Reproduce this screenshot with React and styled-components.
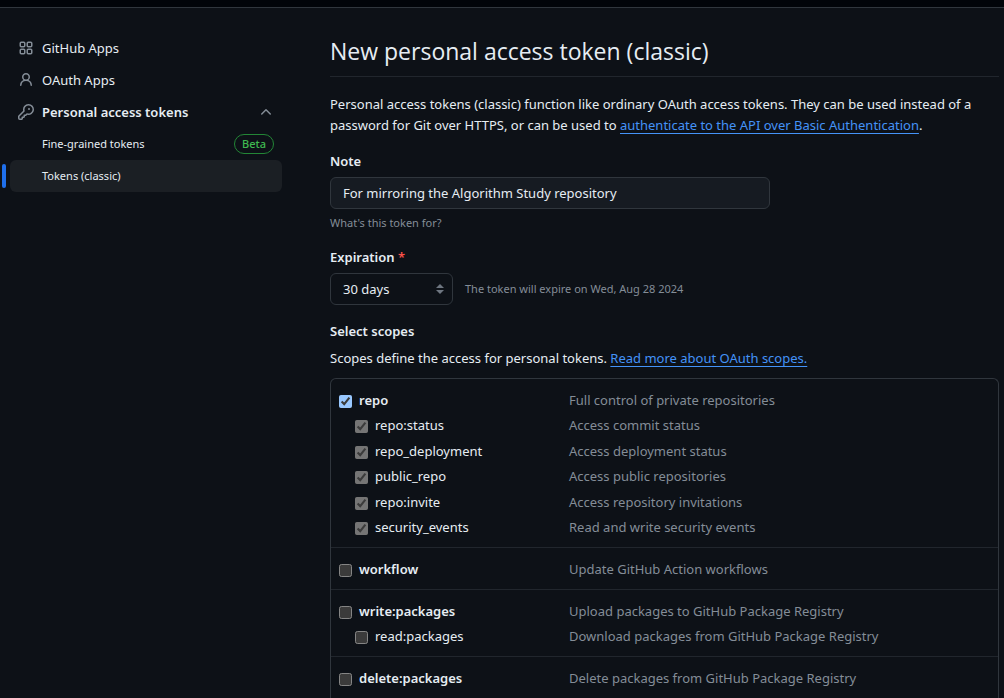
import { useState } from "react";
import styled, { createGlobalStyle } from "styled-components";

const scopeGroups = [
  {
    name: "repo",
    description: "Full control of private repositories",
    children: [
      { name: "repo:status", description: "Access commit status" },
      { name: "repo_deployment", description: "Access deployment status" },
      { name: "public_repo", description: "Access public repositories" },
      { name: "repo:invite", description: "Access repository invitations" },
      { name: "security_events", description: "Read and write security events" },
    ],
  },
  {
    name: "workflow",
    description: "Update GitHub Action workflows",
    children: [],
  },
  {
    name: "write:packages",
    description: "Upload packages to GitHub Package Registry",
    children: [
      {
        name: "read:packages",
        description: "Download packages from GitHub Package Registry",
      },
    ],
  },
  {
    name: "delete:packages",
    description: "Delete packages from GitHub Package Registry",
    children: [],
  },
];

function AppsIcon() {
  return (
    <Icon viewBox="0 0 16 16" aria-hidden="true">
      <g fill="none" stroke="currentColor" strokeWidth="1.5">
        <rect x="2.25" y="2.25" width="4.5" height="4.5" rx="1" />
        <rect x="9.25" y="2.25" width="4.5" height="4.5" rx="1" />
        <rect x="2.25" y="9.25" width="4.5" height="4.5" rx="1" />
        <rect x="9.25" y="9.25" width="4.5" height="4.5" rx="1" />
      </g>
    </Icon>
  );
}

function PersonIcon() {
  return (
    <Icon viewBox="0 0 16 16" aria-hidden="true">
      <path d="M10.561 8.073a6.005 6.005 0 0 1 3.432 5.142.75.75 0 1 1-1.498.07 4.5 4.5 0 0 0-8.99 0 .75.75 0 0 1-1.498-.07 6.004 6.004 0 0 1 3.431-5.142 3.999 3.999 0 1 1 5.123 0ZM10.5 5a2.5 2.5 0 1 0-5 0 2.5 2.5 0 0 0 5 0Z" />
    </Icon>
  );
}

function KeyIcon() {
  return (
    <Icon viewBox="0 0 16 16" aria-hidden="true">
      <path d="M10.5 0a5.499 5.499 0 1 1-1.288 10.848l-.932.932a.749.749 0 0 1-.53.22H7v.75a.749.749 0 0 1-.22.53l-.5.5a.749.749 0 0 1-.53.22H5v.75a.749.749 0 0 1-.22.53l-.5.5a.749.749 0 0 1-.53.22h-2A1.75 1.75 0 0 1 0 14.25v-2c0-.199.079-.389.22-.53l4.932-4.932A5.5 5.5 0 0 1 10.5 0Zm-4 5.5c-.001.431.069.86.205 1.269a.75.75 0 0 1-.181.768L1.5 12.56v1.69c0 .138.112.25.25.25h1.69l.06-.06v-1.19a.75.75 0 0 1 .75-.75h1.19l.06-.06v-1.19a.75.75 0 0 1 .75-.75h1.19l1.023-1.025a.75.75 0 0 1 .768-.18A4 4 0 1 0 6.5 5.5ZM11 6a1 1 0 1 1 0-2 1 1 0 0 1 0 2Z" />
    </Icon>
  );
}

function ChevronUpIcon() {
  return (
    <Icon viewBox="0 0 16 16" aria-hidden="true" $end>
      <path d="M3.22 10.53a.749.749 0 0 1 0-1.06l4.25-4.25a.749.749 0 0 1 1.06 0l4.25 4.25a.749.749 0 1 1-1.06 1.06L8 6.811 4.28 10.53a.749.749 0 0 1-1.06 0Z" />
    </Icon>
  );
}

function Sidebar() {
  return (
    <Nav aria-label="Developer settings">
      <NavLink href="#apps">
        <AppsIcon />
        GitHub Apps
      </NavLink>
      <NavLink href="#oauth">
        <PersonIcon />
        OAuth Apps
      </NavLink>
      <NavToggle type="button" aria-expanded="true">
        <KeyIcon />
        Personal access tokens
        <ChevronUpIcon />
      </NavToggle>
      <SubLink href="#fine-grained">
        Fine-grained tokens
        <Badge>Beta</Badge>
      </SubLink>
      <SubLink href="#classic" aria-current="page" $active>
        Tokens (classic)
      </SubLink>
    </Nav>
  );
}

function ScopeGroup({ group, selected, onToggle }) {
  const isParentSelected = selected.includes(group.name);

  return (
    <Group>
      <ScopeRow>
        <ScopeLabel $bold>
          <input
            type="checkbox"
            checked={isParentSelected}
            onChange={() => onToggle(group.name)}
          />
          {group.name}
        </ScopeLabel>
        <span>{group.description}</span>
      </ScopeRow>
      {group.children.map((scope) => (
        <ScopeRow key={scope.name}>
          <ScopeLabel $nested>
            <input
              type="checkbox"
              checked={isParentSelected || selected.includes(scope.name)}
              disabled={isParentSelected}
              onChange={() => onToggle(scope.name)}
            />
            {scope.name}
          </ScopeLabel>
          <span>{scope.description}</span>
        </ScopeRow>
      ))}
    </Group>
  );
}

function App() {
  const [note, setNote] = useState("For mirroring the Algorithm Study repository");
  const [selected, setSelected] = useState(["repo"]);

  const onToggle = (name) => {
    setSelected((prev) =>
      prev.includes(name) ? prev.filter((s) => s !== name) : [...prev, name]
    );
  };

  return (
    <>
      <GlobalStyle />
      <TopBar />
      <Layout>
        <Sidebar />
        <Main>
          <Title>New personal access token (classic)</Title>
          <Text>
            Personal access tokens (classic) function like ordinary OAuth access
            tokens. They can be used instead of a password for Git over HTTPS, or
            can be used to{" "}
            <a href="#basic-auth">
              authenticate to the API over Basic Authentication
            </a>
            .
          </Text>

          <Field>
            <Label htmlFor="note">Note</Label>
            <NoteInput
              id="note"
              value={note}
              onChange={(e) => setNote(e.target.value)}
            />
            <Hint>What's this token for?</Hint>
          </Field>

          <Field>
            <Label htmlFor="expiration">
              Expiration <em>*</em>
            </Label>
            <Inline>
              <Select id="expiration" defaultValue="30">
                <option value="7">7 days</option>
                <option value="30">30 days</option>
                <option value="60">60 days</option>
                <option value="90">90 days</option>
              </Select>
              <Hint>The token will expire on Wed, Aug 28 2024</Hint>
            </Inline>
          </Field>

          <SectionTitle>Select scopes</SectionTitle>
          <ScopesText>
            Scopes define the access for personal tokens.{" "}
            <a href="#scopes">Read more about OAuth scopes.</a>
          </ScopesText>
          <Scopes>
            {scopeGroups.map((group) => (
              <ScopeGroup
                key={group.name}
                group={group}
                selected={selected}
                onToggle={onToggle}
              />
            ))}
          </Scopes>
        </Main>
      </Layout>
    </>
  );
}

export default App;

const GlobalStyle = createGlobalStyle`
  * {
    box-sizing: border-box;
  }

  html {
    color-scheme: dark;
    background: #0d1117;
  }

  body {
    margin: 0;
    color: #e6edf3;
    font-family: "Noto Sans", "Open Sans", sans-serif;
    font-size: 13px;
    line-height: 21px;
  }
`;

const TopBar = styled.header`
  height: 8px;
  background: #010409;
  border-bottom: 1px solid #30363d;
`;

const Layout = styled.div`
  display: flex;
  gap: 48px;
  padding: 24px 5px 0 10px;
`;

const Icon = styled.svg`
  flex: none;
  width: 16px;
  height: 16px;
  margin-left: ${({ $end }) => ($end ? "auto" : "0")};
  color: #848d97;
  fill: currentColor;
`;

const Nav = styled.nav`
  flex: 0 0 272px;
  display: flex;
  flex-direction: column;
`;

const NavLink = styled.a`
  display: flex;
  align-items: center;
  gap: 8px;
  height: 32px;
  padding: 0 8px;
  border-radius: 6px;
  color: inherit;
  text-decoration: none;
`;

const NavToggle = styled.button`
  display: flex;
  align-items: center;
  gap: 8px;
  height: 32px;
  padding: 0 8px;
  border: 0;
  background: none;
  color: inherit;
  font: inherit;
  font-weight: 600;
  cursor: pointer;
`;

const SubLink = styled(NavLink)`
  position: relative;
  justify-content: space-between;
  padding-left: 32px;
  font-size: 11px;
  line-height: 18px;
  background: ${({ $active }) => ($active ? "#1b1f24" : "none")};

  &::before {
    content: "";
    display: ${({ $active }) => ($active ? "block" : "none")};
    position: absolute;
    left: -8px;
    top: 4px;
    width: 4px;
    height: 24px;
    border-radius: 6px;
    background: #1f6feb;
  }
`;

const Badge = styled.span`
  padding: 0 7px;
  border: 1px solid #238636;
  border-radius: 10px;
  color: #3fb950;
  font-weight: 500;
`;

const Main = styled.main`
  flex: 1;
  min-width: 0;

  a {
    color: #4493f8;
    text-decoration: underline;
    text-underline-offset: 3px;
  }
`;

const Title = styled.h1`
  margin: 0 0 17px;
  padding: 1px 0 7px;
  border-bottom: 1px solid #21262d;
  font-family: "Open Sans", "Noto Sans", sans-serif;
  font-size: 23px;
  font-weight: 400;
  line-height: 36px;
`;

const Text = styled.p`
  margin: 0 0 15px;
`;

const Field = styled.div`
  margin-bottom: 15px;
`;

const Label = styled.label`
  display: block;
  margin-bottom: 5px;
  font-weight: 600;

  em {
    color: #f85149;
    font-style: normal;
  }
`;

const NoteInput = styled.input`
  display: block;
  width: 440px;
  max-width: 100%;
  height: 32px;
  margin-bottom: 5px;
  padding: 0 12px;
  border: 1px solid #30363d;
  border-radius: 6px;
  background: #161b22;
  color: inherit;
  font: inherit;
`;

const Hint = styled.div`
  color: #848d97;
  font-size: 11px;
  line-height: 18px;
`;

const Inline = styled.div`
  display: flex;
  align-items: center;
  gap: 12px;
`;

const Select = styled.select`
  appearance: none;
  width: 123px;
  height: 32px;
  padding: 0 24px 0 12px;
  border: 1px solid #30363d;
  border-radius: 6px;
  background: #0d1117
    url("data:image/svg+xml,%3Csvg xmlns='http://www.w3.org/2000/svg' width='16' height='16' fill='%236e7681'%3E%3Cpath d='M4 9h8l-4 4zM4 7l4-4 4 4z'/%3E%3C/svg%3E")
    no-repeat right 4px center;
  color: inherit;
  font: inherit;
`;

const SectionTitle = styled.h2`
  margin: 16px 0 6px;
  font-size: 13px;
  font-weight: 600;
`;

const ScopesText = styled.p`
  margin: 0 0 9px;
`;

const Scopes = styled.div`
  border: 1px solid #30363d;
  border-bottom: 0;
  border-radius: 6px 6px 0 0;
`;

const Group = styled.ul`
  margin: 0;
  padding: 8px 8px 7px;
  list-style: none;

  & + & {
    border-top: 1px solid #21262d;
  }
`;

const ScopeRow = styled.li`
  display: grid;
  grid-template-columns: 230px 1fr;
  align-items: center;
  min-height: 25px;
  color: #848d97;

  &:nth-child(odd) {
    min-height: 26px;
  }
`;

const ScopeLabel = styled.label`
  display: flex;
  align-items: center;
  gap: 7px;
  padding-left: ${({ $nested }) => ($nested ? "16px" : "0")};
  color: #e6edf3;
  font-weight: ${({ $bold }) => ($bold ? 600 : 400)};

  input {
    width: 13px;
    height: 13px;
    margin: 2px 0 0;
  }
`;
